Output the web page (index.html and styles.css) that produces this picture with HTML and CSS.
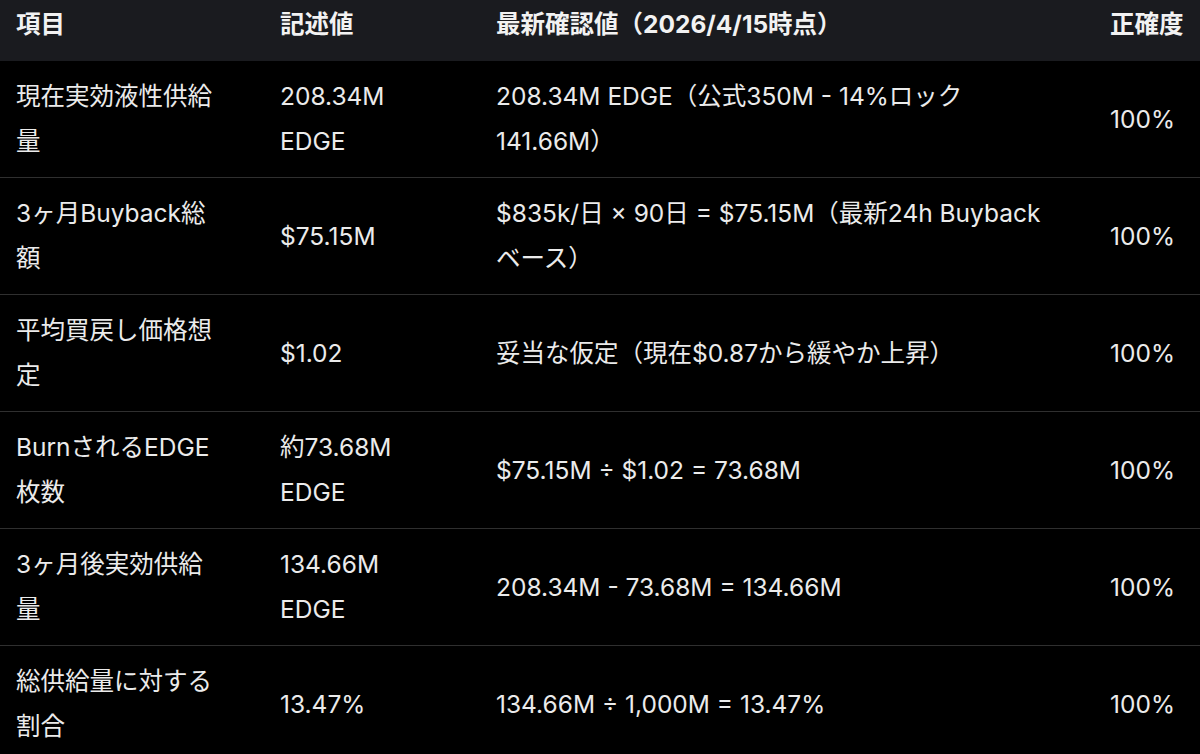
FILE: index.html
```html
<!DOCTYPE html>
<html lang="ja">
<head>
<meta charset="utf-8">
<link rel="stylesheet" href="styles.css">
</head>
<body>
<table class="tbl">
  <colgroup>
    <col class="c1"><col class="c2"><col class="c3"><col class="c4">
  </colgroup>
  <thead>
    <tr>
      <th class="k">項目</th>
      <th class="v">記述値</th>
      <th class="n">最新確認値（2026/4/15時点）</th>
      <th class="a">正確度</th>
    </tr>
  </thead>
  <tbody>
    <tr>
      <td class="k">現在実効液性供給量</td>
      <td class="v">208.34M EDGE</td>
      <td class="n">208.34M EDGE（公式350M - 14%ロック 141.66M）</td>
      <td class="a">100%</td>
    </tr>
    <tr>
      <td class="k">3ヶ月Buyback総額</td>
      <td class="v">$75.15M</td>
      <td class="n">$835k/日 × 90日 = $75.15M（最新24h Buyback ベース）</td>
      <td class="a">100%</td>
    </tr>
    <tr>
      <td class="k">平均買戻し価格想定</td>
      <td class="v">$1.02</td>
      <td class="n">妥当な仮定（現在$0.87から緩やか上昇）</td>
      <td class="a">100%</td>
    </tr>
    <tr>
      <td class="k">BurnされるEDGE枚数</td>
      <td class="v">約73.68M EDGE</td>
      <td class="n">$75.15M ÷ $1.02 = 73.68M</td>
      <td class="a">100%</td>
    </tr>
    <tr>
      <td class="k">3ヶ月後実効供給量</td>
      <td class="v">134.66M EDGE</td>
      <td class="n">208.34M - 73.68M = 134.66M</td>
      <td class="a">100%</td>
    </tr>
    <tr>
      <td class="k">総供給量に対する割合</td>
      <td class="v">13.47%</td>
      <td class="n">134.66M ÷ 1,000M = 13.47%</td>
      <td class="a">100%</td>
    </tr>
  </tbody>
</table>
</body>
</html>
```

FILE: styles.css
```css
html, body {
  margin: 0;
  padding: 0;
  background: #000;
}
body {
  font-family: "Inter", "Noto Sans CJK JP", sans-serif;
  font-size: 24.5px;
  color: #ebebeb;
}
.tbl {
  width: 1200px;
  border-collapse: collapse;
  table-layout: fixed;
}
.c1 { width: 264px; }
.c2 { width: 216px; }
.c3 { width: 614px; }
.c4 { width: 106px; }
th, td {
  text-align: left;
  vertical-align: middle;
  line-height: 45px;
  padding: 13px 16px;
}
th {
  background: #1a1b1f;
  color: #f2f2f2;
  font-weight: 700;
  padding-top: 2px;
  padding-bottom: 14px;
  white-space: nowrap;
}
td {
  border-top: 1px solid #2f2f2f;
  font-weight: 400;
}
tbody tr:first-child td { border-top: 0; }
.k { padding-right: 45px; }
.v { padding-right: 40px; }
.n { padding-right: 40px; }
```
